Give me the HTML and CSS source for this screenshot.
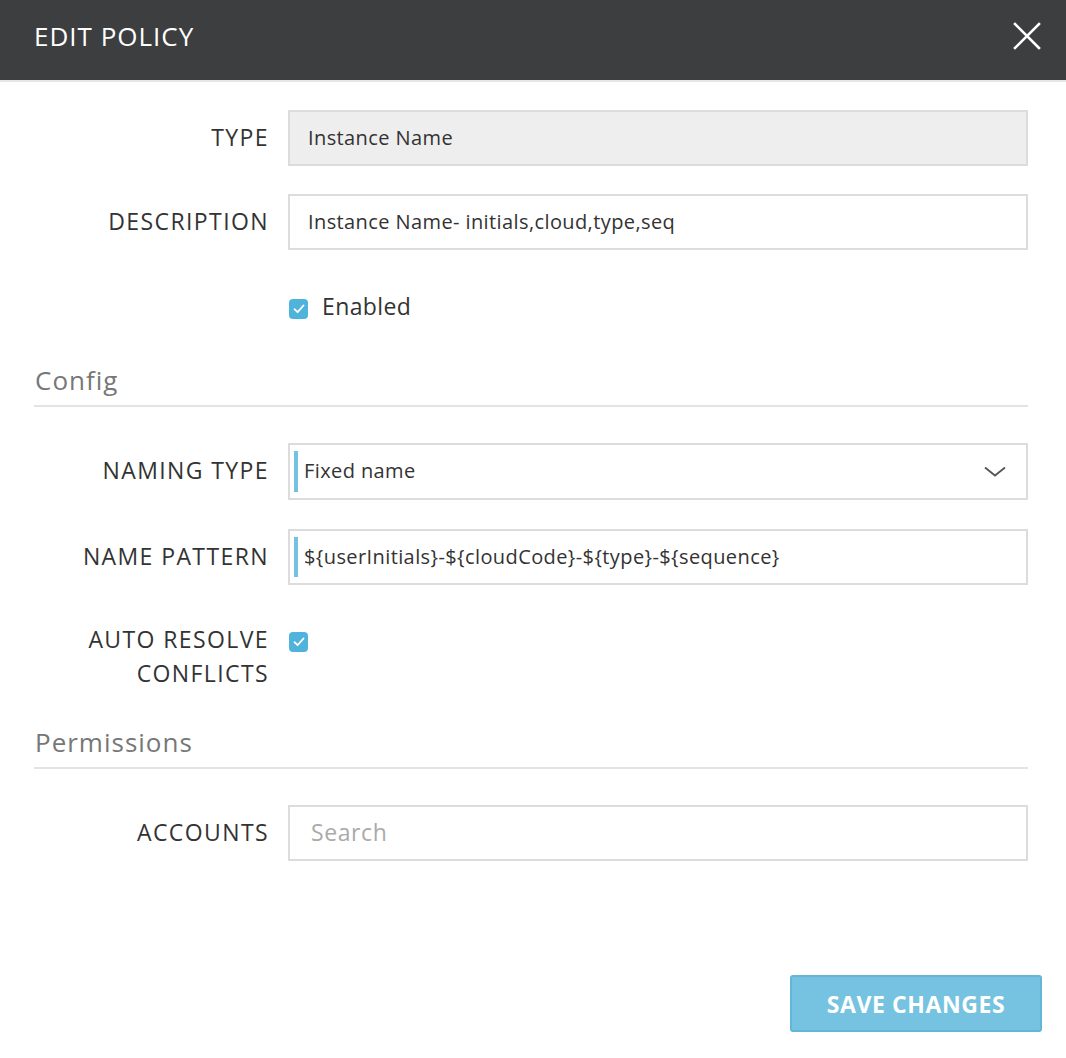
FILE: index.html
```html
<!DOCTYPE html>
<html>
<head>
<meta charset="utf-8">
<link rel="stylesheet" href="styles.css">
</head>
<body>
<div class="modal">
  <header class="modal-header">
    <h1 class="title">EDIT POLICY</h1>
    <button class="close" aria-label="Close">
      <svg width="28" height="28" viewBox="0 0 28 28"><path d="M2 2 L26 26 M26 2 L2 26" stroke="#fff" stroke-width="2.6" stroke-linecap="square"/></svg>
    </button>
  </header>
  <div class="modal-body">
    <div class="row first">
      <label class="lbl">TYPE</label>
      <div class="field readonly">Instance Name</div>
    </div>
    <div class="row">
      <label class="lbl">DESCRIPTION</label>
      <div class="field">Instance Name- initials,cloud,type,seq</div>
    </div>
    <div class="row check-row">
      <span class="lbl"></span>
      <div class="check-wrap">
        <span class="checkbox"><svg width="12" height="10" viewBox="0 0 12 10"><path d="M1.5 5.2 L4.6 8.2 L10.5 1.5" fill="none" stroke="#fff" stroke-width="1.8" stroke-linecap="round" stroke-linejoin="round"/></svg></span>
        <span class="check-text">Enabled</span>
      </div>
    </div>
    <h2 class="section">Config</h2>
    <div class="row section-first">
      <label class="lbl">NAMING TYPE</label>
      <div class="field accent select">
        <span>Fixed name</span>
        <svg class="chev" width="22" height="12" viewBox="0 0 22 12"><path d="M1 1.5 L11 9.5 L21 1.5" fill="none" stroke="#555" stroke-width="1.8"/></svg>
      </div>
    </div>
    <div class="row pattern-row">
      <label class="lbl">NAME PATTERN</label>
      <div class="field accent">${userInitials}-${cloudCode}-${type}-${sequence}</div>
    </div>
    <div class="row auto-row">
      <label class="lbl two">AUTO RESOLVE<br>CONFLICTS</label>
      <div class="check-wrap top">
        <span class="checkbox"><svg width="12" height="10" viewBox="0 0 12 10"><path d="M1.5 5.2 L4.6 8.2 L10.5 1.5" fill="none" stroke="#fff" stroke-width="1.8" stroke-linecap="round" stroke-linejoin="round"/></svg></span>
      </div>
    </div>
    <h2 class="section perm">Permissions</h2>
    <div class="row accounts-row">
      <label class="lbl">ACCOUNTS</label>
      <div class="field placeholder">Search</div>
    </div>
    <div class="footer">
      <button class="save">SAVE CHANGES</button>
    </div>
  </div>
</div>
</body>
</html>
```
FILE: styles.css
```css
* { box-sizing: border-box; }
html, body { margin: 0; padding: 0; background: #fff; }
body { font-family: "Open Sans", "Lato", sans-serif; color: #333; }
.modal { width: 1066px; }
.modal-header {
  height: 82px;
  background: #3d3e40;
  border-bottom: 2px solid #e6e6e6;
  display: flex;
  align-items: center;
  justify-content: space-between;
  padding: 0 24px 0 34px;
}
.title {
  margin: 0;
  color: #fff;
  font-size: 26px;
  font-weight: 400;
  letter-spacing: 1px;
  padding-bottom: 8px;
}
.close {
  background: none;
  border: 0;
  padding: 0;
  width: 30px;
  height: 30px;
  display: flex;
  align-items: center;
  justify-content: center;
  margin-bottom: 8px;
}
.modal-body { padding: 0 38px 0 34px; }
.row {
  display: grid;
  grid-template-columns: 234px 740px;
  column-gap: 20px;
  align-items: center;
  margin-top: 28px;
}
.lbl {
  text-align: right;
  font-size: 23px;
  color: #333;
  letter-spacing: 1.4px;
  margin-right: -1px;
  line-height: 30px;
  margin-top: -3px;
}
.lbl.two { line-height: 34px; margin-top: 0; }
.field {
  height: 56px;
  border: 2px solid #dcdcdc;
  background: #fff;
  padding: 0 18px 2px 18px;
  display: flex;
  align-items: center;
  font-size: 20px;
  letter-spacing: 0.4px;
  color: #333;
}
.field.readonly { background: #eeeeee; }
.field.accent { position: relative; padding-left: 14px; }
.field.accent::before {
  content: "";
  position: absolute;
  left: 4px;
  top: 6px;
  bottom: 6px;
  width: 4px;
  background: #74c2df;
}
.field.select { height: 57px; justify-content: space-between; padding-right: 20px; }
.chev { margin-top: 2px; }
.pattern-row { margin-top: 29px; }
.placeholder { color: #aaa; font-size: 23px; letter-spacing: 0.6px; padding-left: 21px; }
.check-row { height: 56px; margin-top: 28px; }
.check-wrap { display: flex; align-items: center; gap: 14px; padding-left: 1px; }
.check-wrap.top { align-self: start; margin-top: 10px; }
.checkbox {
  width: 19px;
  height: 20px;
  border-radius: 4px;
  background: #4fb3dc;
  display: inline-flex;
  align-items: center;
  justify-content: center;
  margin-top: 6px;
}
.check-wrap.top .checkbox { margin-top: 0; }
.check-text { font-size: 23px; letter-spacing: 0.4px; color: #333; }
.section {
  margin: 28px 0 0 0;
  font-size: 26px;
  font-weight: 400;
  color: #777;
  letter-spacing: 1px;
  padding: 0 0 7px 1px;
  border-bottom: 2px solid #e3e3e3;
  line-height: 36px;
}
.section.perm { margin-top: 34px; }
.section-first { margin-top: 36px; }
.auto-row { margin-top: 37px; align-items: start; }
.accounts-row { margin-top: 36px; }
.footer {
  display: flex;
  justify-content: flex-end;
  margin-top: 114px;
  margin-right: -14px;
}
.save {
  width: 252px;
  height: 57px;
  background: #76c3e1;
  border: 2px solid #62b7d9;
  border-radius: 3px;
  color: #fff;
  font-family: inherit;
  font-size: 23px;
  font-weight: 700;
  letter-spacing: 0.6px;
}
```
